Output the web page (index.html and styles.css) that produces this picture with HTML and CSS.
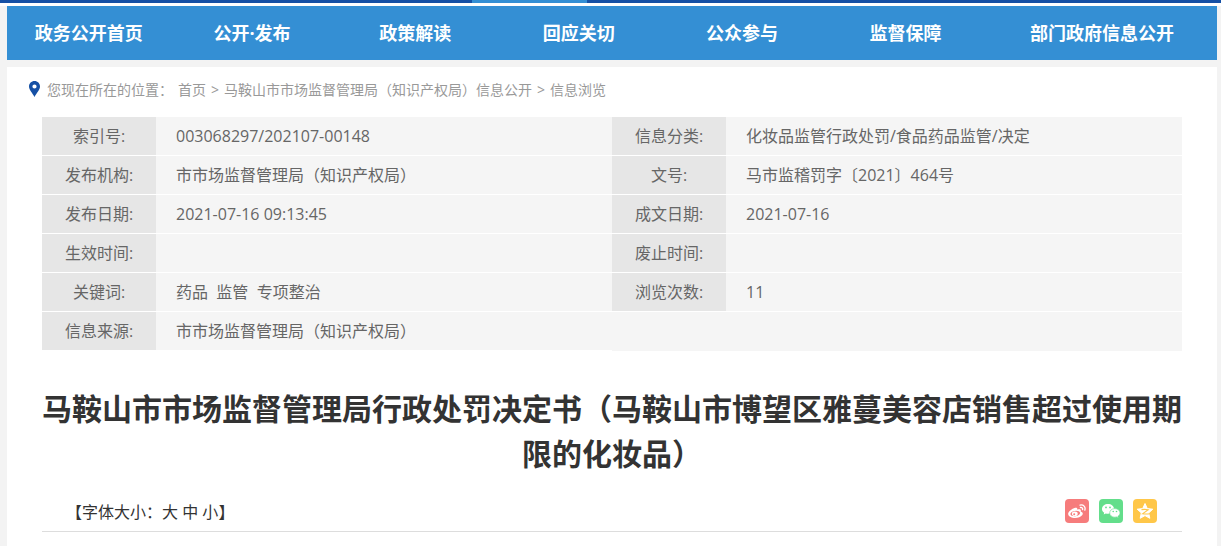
FILE: index.html
```
<!DOCTYPE html>
<html lang="zh-CN">
<head>
    <meta charset="UTF-8">
    <meta name="viewport" content="width=device-width, initial-scale=1.0">
    <title>马鞍山市市场监督管理局行政处罚决定书</title>
    <link rel="stylesheet" href="styles.css">
</head>
<body>
    <div class="top-bar"><div class="top-current"></div></div>
    <div class="wrap">
        <nav class="nav">
            <a href="#">政务公开首页</a>
            <a href="#">公开·发布</a>
            <a href="#">政策解读</a>
            <a href="#">回应关切</a>
            <a href="#">公众参与</a>
            <a href="#">监督保障</a>
            <a href="#" class="wide">部门政府信息公开</a>
        </nav>
        <div class="main">
            <div class="position">
                <svg class="pin" viewBox="0 0 11 16"><path fill="#1550a5" fill-rule="evenodd" d="M5.500 0C2.400 0 0 2.400 0 5.500C0 9 3.500 12 5.500 16C7.500 12 11 9 11 5.500C11 2.400 8.600 0 5.500 0ZM5.500 3.400A2.100 2.100 0 1 1 5.500 7.600A2.100 2.100 0 1 1 5.500 3.400Z"/></svg>
                <span>您现在所在的位置：</span>
                <a href="#">首页</a>
                <span>&gt;</span>
                <a href="#">马鞍山市市场监督管理局（知识产权局）信息公开</a>
                <span>&gt;</span>
                <a href="#">信息浏览</a>
            </div>
            <table class="info">
                <tr>
                    <th>索引号:</th><td>003068297/202107-00148</td>
                    <th>信息分类:</th><td>化妆品监管行政处罚/食品药品监管/决定</td>
                </tr>
                <tr>
                    <th>发布机构:</th><td>市市场监督管理局（知识产权局）</td>
                    <th>文号:</th><td>马市监稽罚字〔2021〕464号</td>
                </tr>
                <tr>
                    <th>发布日期:</th><td>2021-07-16 09:13:45</td>
                    <th>成文日期:</th><td>2021-07-16</td>
                </tr>
                <tr>
                    <th>生效时间:</th><td></td>
                    <th>废止时间:</th><td></td>
                </tr>
                <tr>
                    <th>关键词:</th><td>药品&nbsp; 监管&nbsp; 专项整治</td>
                    <th>浏览次数:</th><td>11</td>
                </tr>
                <tr>
                    <th>信息来源:</th><td>市市场监督管理局（知识产权局）</td>
                    <td colspan="2" class="blank"></td>
                </tr>
            </table>
            <h1>马鞍山市市场监督管理局行政处罚决定书（马鞍山市博望区雅蔓美容店销售超过使用期限的化妆品）</h1>
            <div class="tools">
                <div class="font-size">【字体大小：<button>大</button> <button>中</button> <button>小</button>】</div>
                <div class="share">
                    <a href="#" class="weibo" aria-label="新浪微博">
                        <svg viewBox="0 0 24 24">
                            <path fill="#fff" fill-rule="evenodd" d="M9.500 9C11 8.300 12.700 8.600 12.300 10.700C14.500 9.900 16.500 10.400 15.700 12.400C17.500 13 18.400 14.300 17.300 16C14.500 20 4.300 20 3.200 15.200C2.800 13 6.500 9.900 9.500 9ZM10.300 11.900C7.400 12.100 5.300 13.400 5.400 15C5.600 16.700 7.900 17.500 10.500 17.200C13.400 16.900 15.300 15.400 15.100 13.900C14.900 12.500 12.900 11.700 10.300 11.900Z"/>
                            <ellipse cx="9.800" cy="14.700" rx="2.900" ry="2.300" fill="#fff"/>
                            <circle cx="9.200" cy="15.200" r="1" fill="#f67c7c"/>
                            <path fill="none" stroke="#fff" stroke-width="1.300" stroke-linecap="round" d="M15 6.100C18.500 5.300 20.900 8 19.800 11.200M15.400 8.500C17 8.200 18 9.300 17.500 10.700"/>
                        </svg>
                    </a>
                    <a href="#" class="wechat" aria-label="微信">
                        <svg viewBox="0 0 24 24">
                            <path fill="#fff" d="M9 5C5.700 5 3 7.100 3 9.900C3 11.500 3.900 12.800 5.200 13.700L4.700 15.400L6.800 14.400C7.500 14.600 8.300 14.700 9 14.700C12.300 14.700 15 12.500 15 9.800C15 7.100 12.300 5 9 5Z"/>
                            <path fill="#fff" stroke="#63de8b" stroke-width=".6" d="M15.800 9.600C12.900 9.600 10.700 11.500 10.700 13.900C10.700 16.300 12.900 18.200 15.800 18.200C16.400 18.200 17 18.100 17.600 17.900L19.400 18.900L18.900 17.300C20.200 16.500 21 15.300 21 13.900C21 11.500 18.700 9.600 15.800 9.600Z"/>
                            <g fill="#63de8b"><circle cx="7" cy="8.400" r=".9"/><circle cx="11" cy="8.400" r=".9"/><circle cx="14.200" cy="12.500" r=".8"/><circle cx="17.500" cy="12.500" r=".8"/></g>
                        </svg>
                    </a>
                    <a href="#" class="qzone" aria-label="QQ空间">
                        <svg viewBox="0 0 24 24">
                            <path fill="#fff" stroke="#fff" stroke-linejoin="round" d="M12 4.500L14.300 9.600L19.800 10.200L15.700 13.900L16.800 19.300L12 16.600L7.200 19.300L8.300 13.900L4.200 10.200L9.700 9.600Z"/>
                            <path fill="none" stroke="#ffc749" stroke-width="1.100" d="M8.500 10.600C11 10.200 13.200 10.300 15.200 10.700L9.500 14.800C12 15.200 14.500 15.100 18 14.500"/>
                        </svg>
                    </a>
                </div>
            </div>
        </div>
    </div>
</body>
</html>
```

FILE: styles.css
```
* { box-sizing: border-box; }
body {
    margin: 0;
    background: #f3f3f3;
    color: #333;
    font-family: "Open Sans", "Noto Sans CJK SC", sans-serif;
    font-size: 16px;
}
a { color: inherit; text-decoration: none; }
.top-bar {
    height: 6px;
    background: #1550a5;
    border-bottom: 3px solid #fff;
    padding: 0 4px 0 7px;
}
.top-current {
    width: 9.5%;
    height: 3px;
    margin-left: 38.4%;
    background: #348fd4;
}
.wrap { padding: 0 4px 0 7px; }
.nav {
    display: flex;
    background: #348fd4;
    margin-bottom: 7px;
}
.nav a {
    width: 13.5%;
    line-height: 54px;
    text-align: center;
    color: #fff;
    font-size: 18px;
    font-weight: bold;
    white-space: nowrap;
}
.nav a.wide { width: 19%; }
.main {
    background: #fff;
    padding: 0 35px 15px;
}
.position {
    display: flex;
    align-items: center;
    gap: 5px;
    height: 44px;
    margin: 0 0 6px -13px;
    font-size: 14px;
    color: #999;
}
.pin { width: 11px; height: 16px; margin-right: 2px; }
.info {
    width: 100%;
    table-layout: fixed;
    border-collapse: separate;
    border-spacing: 0;
    color: #666;
}
.info th, .info td {
    height: 39px;
    padding: 0;
    line-height: 38px;
    border-bottom: 1px solid #fff;
}
.info th {
    width: 10%;
    background: #e6e6e6;
    font-weight: normal;
    text-align: center;
}
.info td {
    width: 40%;
    padding-left: 20px;
    background: #f5f5f5;
}
.info td.blank { border-bottom: 0; }
h1 {
    margin: 35px 0 0;
    font-size: 30px;
    line-height: 45px;
    text-align: center;
}
.tools {
    display: flex;
    justify-content: space-between;
    align-items: center;
    height: 56px;
    padding: 15px 25px 0 24px;
    border-bottom: 1px solid #ddd;
}
.font-size button {
    padding: 0;
    border: 0;
    background: none;
    color: inherit;
    font: inherit;
    cursor: pointer;
}
.share { display: flex; gap: 10px; }
.share a {
    width: 24px;
    height: 24px;
    border-radius: 4px;
}
.share svg { display: block; }
.weibo { background: #f67c7c; }
.wechat { background: #63de8b; }
.qzone { background: #ffc749; }
```
